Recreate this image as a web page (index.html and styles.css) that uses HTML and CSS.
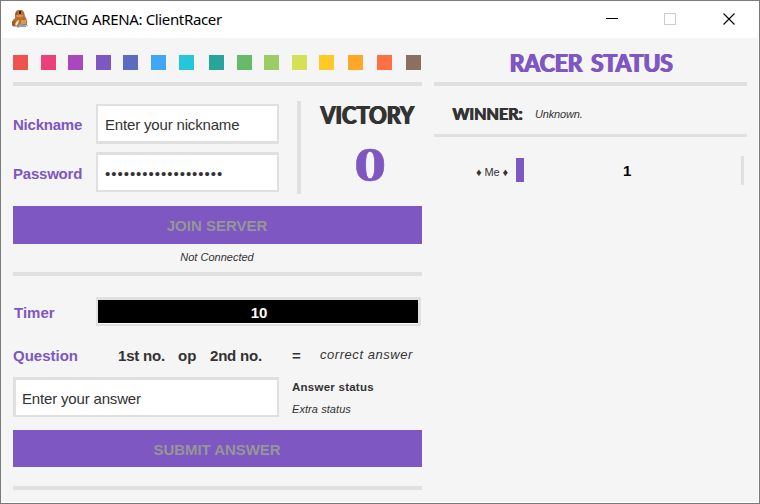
FILE: index.html
```
<!DOCTYPE html>
<html lang="en">
<head>
<meta charset="utf-8">
<title>RACING ARENA: ClientRacer</title>
<link rel="stylesheet" href="styles.css">
</head>
<body>
<div class="window">
  <header class="titlebar">
    <svg class="app-icon" width="18" height="20" viewBox="0 0 18 20">
      <path d="M5 2 L7 1 H11 L13 3 L14 7 L15 9 L16 12 V17 L13 18 H3 L1 16 V13 L4 9 L4 6 Z" fill="#b87333"/>
      <path d="M3 10 L1 13 V16 L3 18 L5 15 Z M12 9 L14 11 L12 13 Z M5 3 H7 V6 H4 Z" fill="#985c2d"/>
      <path d="M8 2 H10 V5 H8 Z" fill="#35241d"/>
      <path d="M5 6 H12 L11 8 H6 Z M10 11 H15 V15 H10 Z" fill="#d89a52"/>
      <path d="M6 12 L8 11 L7 15 L5 17 L4 15 Z" fill="#f3dfc7"/>
      <path d="M8 16 L10 15 L12 16 H15 V18 H9 L6 19 Z" fill="#80a5d0"/>
      <path d="M2 17 H6 V18 H2 Z M14 16 H17 V17 H14 Z" fill="#b8bcc3"/>
    </svg>
    <span class="title">RACING ARENA: ClientRacer</span>
    <svg class="controls" width="124" height="14" viewBox="0 0 124 14" fill="none" shape-rendering="crispEdges">
      <path d="M0 6.5H12" stroke="#000"/>
      <rect x="58.5" y="1.5" width="11" height="11" stroke="#ccc"/>
      <path d="M117.5 1.5L128.5 12.5M128.5 1.5L117.5 12.5" stroke="#000" shape-rendering="auto" stroke-width="1.1"/>
    </svg>
  </header>
  <main class="content">
    <section class="client">
      <div class="palette">
        <i class="swatch red"></i><i class="swatch pink"></i><i class="swatch magenta"></i><i class="swatch purple"></i><i class="swatch indigo"></i><i class="swatch blue"></i><i class="swatch cyan"></i><i class="swatch teal"></i><i class="swatch green"></i><i class="swatch light-green"></i><i class="swatch lime"></i><i class="swatch amber"></i><i class="swatch orange"></i><i class="swatch coral"></i><i class="swatch brown"></i>
      </div>
      <div class="rule"></div>
      <div class="account">
        <div class="fields">
          <div class="field"><label class="label nickname">Nickname</label><div class="input name-input"><span class="value-name">Enter your nickname</span></div></div>
          <div class="field"><label class="label password">Password</label><div class="input pass-input"><span class="dots">•••••••••••••••••••</span></div></div>
        </div>
        <div class="vertical-rule"></div>
        <div class="victory">
          <span class="display victory-title">VICTORY</span>
          <span class="score">0</span>
        </div>
      </div>
      <div class="button join"><span>JOIN SERVER</span></div>
      <div class="connection">Not Connected</div>
      <div class="rule"></div>
      <div class="timer-row"><span class="label timer-label">Timer</span><div class="timer">10</div></div>
      <div class="question-row">
        <span class="label question">Question</span>
        <span class="term first">1st no.</span><span class="term op">op</span><span class="term second">2nd no.</span><span class="term equals">=</span><span class="correct">correct answer</span>
      </div>
      <div class="answer-row">
        <div class="input answer-input"><span class="value-answer">Enter your answer</span></div>
        <div class="statuses"><strong>Answer status</strong><em>Extra status</em></div>
      </div>
      <div class="button submit"><span>SUBMIT ANSWER</span></div>
      <div class="rule"></div>
    </section>
    <section class="racers">
      <h1 class="display status-title">RACER STATUS</h1>
      <div class="rule"></div>
      <div class="winner"><span class="display winner-title">WINNER:</span><em>Unknown.</em></div>
      <div class="rule thin"></div>
      <div class="track"><span class="me">♦ Me ♦</span><i class="car"></i><b class="position">1</b><i class="finish"></i></div>
    </section>
  </main>
</div>
</body>
</html>
```
FILE: styles.css
```
* { box-sizing: border-box; }
body { margin: 0; font-family: "Liberation Sans", Arial, sans-serif; color: #333; }
.window { width: 760px; height: 504px; border: 1px solid #7a7a7a; background: #fff; overflow: hidden; white-space: nowrap; }
.titlebar { height: 37px; display: flex; padding-left: 10px; color: #000; }
.app-icon { margin-top: 8px; flex: none; }
.title { margin-left: 6px; width: 571px; font: 15px/37px "Noto Sans", sans-serif; letter-spacing: -0.35px; }
.controls { margin-top: 11px; overflow: visible; flex: none; }
.content { height: 464px; width: 757px; display: grid; grid-template-columns: 409px 313px; gap: 12px; padding-left: 12px; background: #f5f5f5; }
.rule { height: 4px; background: #e0e0e0; }
.thin { height: 3px; }
.palette { height: 44px; padding-top: 17px; display: flex; }
.swatch { width: 15px; height: 15px; margin-right: 13px; flex: none; }
.red { background: #ef5350; }
.pink { background: #ec407a; margin-right: 12px; }
.magenta { background: #ab47bc; }
.purple { background: #7e57c2; margin-right: 12px; }
.indigo { background: #5c6bc0; }
.blue { background: #42a5f5; }
.cyan { background: #26c6da; margin-right: 15px; }
.teal { background: #26a69a; }
.green { background: #66bb6a; margin-right: 12px; }
.light-green { background: #9ccc65; }
.lime { background: #d4e157; margin-right: 12px; }
.amber { background: #ffca28; margin-right: 14px; }
.orange { background: #ffa726; margin-right: 14px; }
.coral { background: #ff7043; margin-right: 14px; }
.brown { background: #8d6e63; margin-right: 0; }
.account { height: 120px; display: flex; }
.fields { width: 284px; padding-top: 18px; }
.field { display: flex; align-items: center; height: 40px; margin-bottom: 8px; }
.label { width: 83px; flex: none; color: #7e57c2; font-size: 15px; font-weight: bold; }
.nickname, .password { letter-spacing: -0.22px; }
.password { padding-top: 2px; }
.input { height: 40px; width: 183px; border: 2px solid #e0e0e0; background: #fff; font-size: 15px; letter-spacing: -0.17px; display: flex; align-items: center; }
.name-input { border-bottom-width: 3px; padding: 2px 0 0 7px; }
.pass-input { border-top-width: 3px; padding: 1px 0 0 7px; }
.dots { font-size: 15px; letter-spacing: 0.97px; }
.vertical-rule { width: 4px; height: 93px; margin-top: 15px; background: #e0e0e0; }
.victory { width: 121px; padding-left: 11px; display: flex; flex-direction: column; align-items: center; }
.display { font-family: Lato, sans-serif; font-weight: 700; text-shadow: 1px 0 currentColor, 0.5px 0 currentColor; }
.victory-title { font-size: 24px; line-height: 30px; margin-top: 14px; transform: scaleX(0.91); text-shadow: 1px 0 currentColor, 1.6px 0 currentColor; }
.score { font: bold 49px/50px "Liberation Serif", serif; color: #7e57c2; transform: scaleX(1.32); margin: 10px 0 0 6px; -webkit-text-stroke: 0.5px #7e57c2; }
.button { background: #7e57c2; color: #969696; font-size: 15px; font-weight: bold; text-align: center; }
.join { height: 38px; line-height: 40px; padding-right: 1px; }
.connection { height: 28px; line-height: 27px; padding-right: 1px; text-align: center; font-size: 11px; font-style: italic; }
.timer-row { height: 50px; padding-top: 21px; display: flex; }
.timer-label { padding-left: 1px; line-height: 31px; }
.timer { width: 325px; height: 29px; border: 3px solid #e0e0e0; border-left-width: 2px; border-bottom-width: 2px; background: linear-gradient(#000 23px, #fff 23px); color: #fff; text-align: center; font-size: 15px; font-weight: bold; line-height: 26px; padding-left: 2px; }
.question-row { height: 51px; display: flex; line-height: 60px; font-size: 15px; font-weight: bold; }
.question { width: 105px; }
.first { width: 60px; letter-spacing: -0.2px; }
.op { width: 32px; }
.second { width: 82px; letter-spacing: -0.2px; }
.equals { width: 28px; }
.correct { font: italic 13px/58px "Liberation Sans", sans-serif; letter-spacing: 0.55px; }
.answer-row { display: flex; height: 53px; }
.answer-input { width: 266px; border-width: 3px 2px 2px 3px; padding: 1px 0 0 6px; }
.statuses { display: flex; flex-direction: column; margin-left: 13px; font-size: 11px; line-height: 22px; letter-spacing: 0.07px; }
.statuses strong { font-size: 11.5px; line-height: 21px; letter-spacing: 0.25px; }
.submit { height: 37px; line-height: 39px; margin-bottom: 19px; padding-right: 1px; letter-spacing: -0.05px; }
.status-title { margin: 0; height: 44px; font-size: 24px; line-height: 49px; color: #7e57c2; text-align: center; word-spacing: 3px; transform: scaleX(0.95); text-shadow: 1px 0 currentColor, 1.6px 0 currentColor; }
.winner { height: 48px; padding-left: 18px; display: flex; line-height: 56px; }
.winner-title { font-size: 17.5px; width: 83px; line-height: 55px; transform: scaleX(0.92); transform-origin: left; }
.winner em { font-size: 11px; letter-spacing: -0.15px; }
.track { display: flex; padding-top: 19px; }
.me { width: 82px; padding-left: 42px; font-size: 11px; letter-spacing: -0.1px; line-height: 33px; }
.car { width: 8px; height: 24px; margin-top: 2px; background: #7e57c2; }
.position { width: 217px; padding-left: 99px; color: #000; font-size: 15px; line-height: 30px; }
.finish { width: 3px; height: 29px; background: #e0e0e0; }
```
